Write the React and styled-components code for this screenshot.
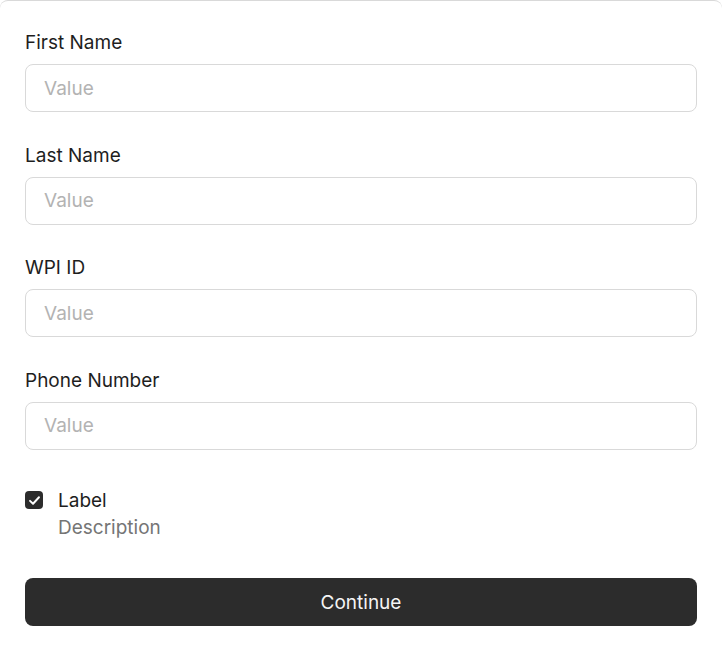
import React from "react";
import styled, { createGlobalStyle } from "styled-components";

const Global = createGlobalStyle`
  html, body { margin: 0; padding: 0; background: #ffffff; }
  body { font-family: Inter, "Noto Sans", sans-serif; color: #1e1e1e; }
  * { box-sizing: border-box; }
`;

const Card = styled.form`
  width: 722px;
  border-top: 1px solid #d9d9d9;
  border-radius: 8px;
  background: #fff;
  padding: 29px 25px 40px;
  display: flex;
  flex-direction: column;
`;

const Fields = styled.div`
  display: flex;
  flex-direction: column;
  gap: 30.5px;
`;

const Field = styled.label`
  display: flex;
  flex-direction: column;
  gap: 9px;
`;

const LabelText = styled.span`
  font-size: 19px;
  line-height: 25px;
  color: #1e1e1e;
`;

const Input = styled.input`
  height: 48px;
  width: 100%;
  border: 1px solid #d9d9d9;
  border-radius: 8px;
  padding: 0 18px;
  font-family: inherit;
  font-size: 19px;
  color: #1e1e1e;
  background: #fff;
  outline: none;
  &::placeholder { color: #b3b3b3; }
`;

const CheckRow = styled.div`
  margin-top: 38px;
  display: flex;
  align-items: flex-start;
  gap: 15px;
`;

const Box = styled.span`
  width: 18px;
  height: 18px;
  margin-top: 3.5px;
  border-radius: 4px;
  background: #2c2c2c;
  display: flex;
  align-items: center;
  justify-content: center;
  flex: none;
`;

const CheckText = styled.div`
  display: flex;
  flex-direction: column;
  gap: 2px;
`;

const Description = styled.span`
  font-size: 19px;
  line-height: 25px;
  color: #757575;
`;

const Button = styled.button`
  margin-top: 38.5px;
  height: 48px;
  width: 100%;
  border: none;
  border-radius: 8px;
  background: #2c2c2c;
  color: #f5f5f5;
  font-family: inherit;
  font-size: 19px;
  cursor: pointer;
`;

const fields = ["First Name", "Last Name", "WPI ID", "Phone Number"];

export default function App() {
  return (
    <>
      <Global />
      <Card onSubmit={(e) => e.preventDefault()}>
        <Fields>
          {fields.map((f) => (
            <Field key={f}>
              <LabelText>{f}</LabelText>
              <Input placeholder="Value" />
            </Field>
          ))}
        </Fields>
        <CheckRow>
          <Box>
            <svg width="13" height="13" viewBox="0 0 16 16" fill="none">
              <path d="M2.5 8.5 L6.2 12 L13.5 4" stroke="#fff" strokeWidth="2.4" strokeLinecap="round" strokeLinejoin="round" />
            </svg>
          </Box>
          <CheckText>
            <LabelText>Label</LabelText>
            <Description>Description</Description>
          </CheckText>
        </CheckRow>
        <Button type="submit">Continue</Button>
      </Card>
    </>
  );
}
